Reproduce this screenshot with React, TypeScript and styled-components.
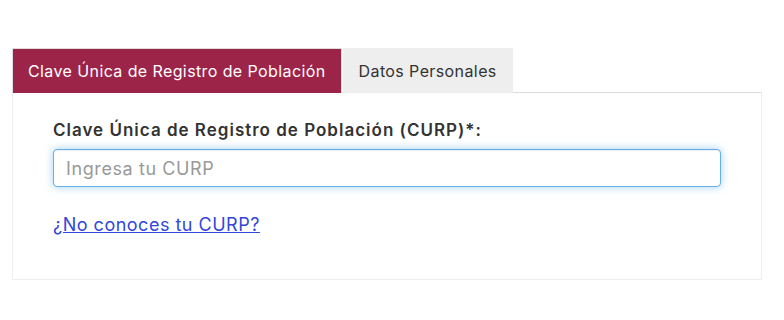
import React from "react";
import styled, { createGlobalStyle } from "styled-components";

const Global = createGlobalStyle`
  html, body { margin: 0; padding: 0; background: #fff; }
  body { font-family: Inter, "Open Sans", sans-serif; color: #333; }
`;

const Page = styled.div`
  padding: 48px 0 0 12px;
  width: 750px;
`;

const TabBar = styled.div`
  display: flex;
  align-items: stretch;
  border-bottom: 1px solid #ddd;
  height: 44px;
`;

const Tab = styled.button<{ $active?: boolean }>`
  display: flex;
  align-items: center;
  padding: 0 15px 0 15px;
  margin-right: 1px;
  border: 1px solid ${(p) => (p.$active ? "#ddd" : "#eee")};
  border-bottom: none;
  background: ${(p) => (p.$active ? "#9d2449" : "#eee")};
  color: ${(p) => (p.$active ? "#fff" : "#333")};
  font-family: inherit;
  font-size: 16px;
  letter-spacing: 0.4px;
  margin-bottom: -1px;
  cursor: pointer;
`;

const Panel = styled.div`
  border: 1px solid #eee;
  border-top: none;
  padding: 26px 40px 40px 40px;
  height: 187px;
  box-sizing: border-box;
`;

const Label = styled.label`
  display: block;
  font-size: 17px;
  line-height: 22px;
  font-weight: 600;
  letter-spacing: 1px;
  color: #333;
  margin-bottom: 8px;
`;

const Input = styled.input`
  display: block;
  width: 100%;
  box-sizing: border-box;
  height: 38px;
  padding: 0 12px;
  border: 1px solid #66afe9;
  border-radius: 4px;
  box-shadow: inset 0 1px 1px rgba(0,0,0,.075), 0 0 8px rgba(102,175,233,.6);
  font-family: inherit;
  font-size: 18px;
  letter-spacing: 0.6px;
  color: #555;
  caret-color: #333;
  outline: none;
  &::placeholder { color: #999; }
`;

const LinkRow = styled.div`
  margin-top: 26px;
  font-size: 18px;
  line-height: 24px;
  letter-spacing: 0.5px;
`;

const HelpLink = styled.a`
  color: #3246dc;
  text-decoration: underline;
`;

export default function App() {
  return (
    <>
      <Global />
      <Page>
        <TabBar>
          <Tab $active>Clave Única de Registro de Población</Tab>
          <Tab>Datos Personales</Tab>
        </TabBar>
        <Panel>
          <Label htmlFor="curp">Clave Única de Registro de Población (CURP)*:</Label>
          <Input id="curp" placeholder="Ingresa tu CURP" autoFocus />
          <LinkRow>
            <HelpLink href="#">¿No conoces tu CURP?</HelpLink>
          </LinkRow>
        </Panel>
      </Page>
    </>
  );
}
